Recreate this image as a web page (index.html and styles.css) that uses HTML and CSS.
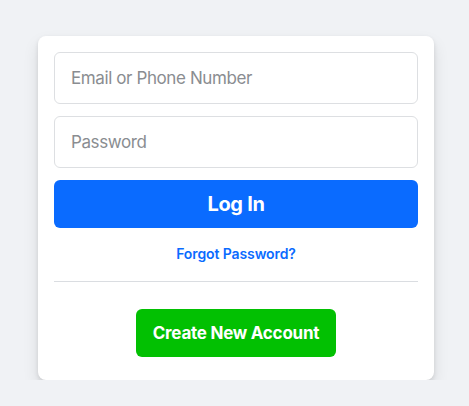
FILE: index.html
```html
<!DOCTYPE html>
<html lang="en">
<head>
    <meta charset="UTF-8">
    <meta name="viewport" content="width=device-width, initial-scale=1.0">
    <title>Log In</title>
    <link rel="stylesheet" href="styles.css">
</head>
<body>
    <div class="login-card">
        <form class="login-form">
            <input type="text" class="field" placeholder="Email or Phone Number">
            <input type="password" class="field" placeholder="Password">
            <button type="submit" class="login-btn">Log In</button>
        </form>
        <a href="#" class="forgot-link">Forgot Password?</a>
        <div class="divider"></div>
        <div class="create-row">
            <button class="create-btn">Create New Account</button>
        </div>
    </div>
</body>
</html>
```

FILE: styles.css
```css
body {
    font-family: 'Inter', 'Liberation Sans', sans-serif;
    margin: 0;
    padding: 36px 35px 0 38px;
    background-color: #f0f2f5;
    color: #1c1e21;
}

.login-card {
    width: 396px;
    box-sizing: border-box;
    background: white;
    border-radius: 8px;
    box-shadow: 0 2px 4px rgba(0, 0, 0, 0.1), 0 8px 16px rgba(0, 0, 0, 0.1);
    padding: 16px 16px 23px;
}

.login-form {
    display: flex;
    flex-direction: column;
    gap: 12px;
}

.field {
    height: 52px;
    box-sizing: border-box;
    border: 1px solid #dddfe2;
    border-radius: 6px;
    padding: 14px 16px;
    font-family: inherit;
    font-size: 17px;
    letter-spacing: -0.4px;
    color: #1d2129;
    outline: none;
}

.field::placeholder {
    color: #8a8d91;
}

.login-btn {
    height: 48px;
    border: none;
    border-radius: 6px;
    background-color: #0a6bff;
    color: white;
    font-family: inherit;
    font-size: 20px;
    font-weight: 700;
    letter-spacing: -0.3px;
    cursor: pointer;
}

.forgot-link {
    display: block;
    text-align: center;
    margin-top: 16px;
    line-height: 19px;
    font-size: 14px;
    font-weight: 600;
    letter-spacing: -0.1px;
    color: #0a6bff;
    text-decoration: none;
}

.divider {
    border-bottom: 1px solid #dadde1;
    margin: 18px 0 27px;
}

.create-row {
    display: flex;
    justify-content: center;
}

.create-btn {
    width: 200px;
    height: 48px;
    border: none;
    border-radius: 6px;
    background-color: #02c002;
    color: white;
    font-family: inherit;
    font-size: 17px;
    font-weight: 700;
    letter-spacing: -0.25px;
    cursor: pointer;
}
```
